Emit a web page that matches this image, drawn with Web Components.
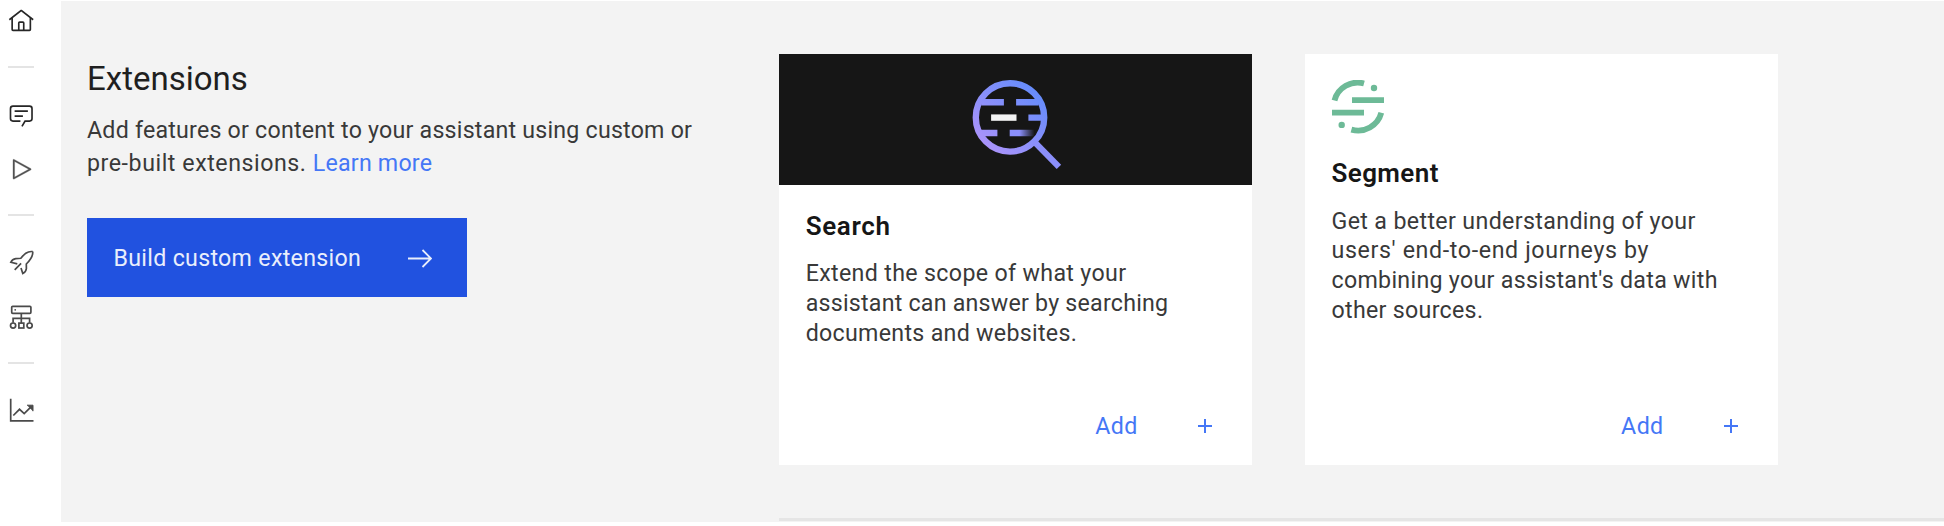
<!DOCTYPE html>
<html lang="en">
<head>
<meta charset="utf-8">
<title>Extensions</title>
<style>
html,body{margin:0;height:100%;background:#fff;overflow:hidden}
body{font-family:Roboto,"Liberation Sans",sans-serif;color:#393939}
</style>
</head>
<body>
<extensions-page></extensions-page>
<script>
const define = (name, html) => {
  const t = document.createElement('template');
  t.innerHTML = html;
  customElements.define(name, class extends HTMLElement {
    constructor() {
      super();
      this.attachShadow({mode: 'open'}).append(t.content.cloneNode(true));
    }
  });
};

/* one line of copy, with its tracking in --ls */
define('text-line', `<style>
:host{display:block;white-space:nowrap;letter-spacing:var(--ls,.3px)}
</style><slot></slot>`);

define('side-nav', `<style>
:host{display:block;box-sizing:border-box;width:60.5px;padding:7.5px 0 0 7.5px;background:#fff}
svg{display:block;width:26.5px;height:26.5px;fill:#262626}
.s{fill:none;stroke:#4a4a4a;stroke-width:1.7}
hr{margin:0;border:0;width:26.5px;height:2px;background:#e4e4e4}
</style>
<svg viewBox="0 0 32 32"><path d="M16.612 2.214a1.01 1.01 0 0 0-1.243 0L1 13.419l1.243 1.572L4 13.621V26a2 2 0 0 0 2 2h20a2 2 0 0 0 2-2V13.63L29.757 15 31 13.428ZM18 26h-4v-8h4Zm2 0v-8a2 2 0 0 0-2-2h-4a2 2 0 0 0-2 2v8H6V12.062l10-7.79 10 7.8V26Z"/></svg>
<hr style="margin-top:32px">
<svg viewBox="0 0 32 32" style="margin-top:33.500px"><path d="M17.74 30 16 29l4-7h6a2 2 0 0 0 2-2V8a2 2 0 0 0-2-2H6a2 2 0 0 0-2 2v12a2 2 0 0 0 2 2h9v2H6a4 4 0 0 1-4-4V8a4 4 0 0 1 4-4h20a4 4 0 0 1 4 4v12a4 4 0 0 1-4 4h-4.84ZM8 10h16v2H8Zm0 6h10v2H8Z"/></svg>
<svg viewBox="0 0 32 32" style="margin-top:28px;fill:#525252;stroke:#525252;stroke-width:.3"><path d="M7 28a1 1 0 0 1-1-1V5a1 1 0 0 1 1.482-.876l20 11a1 1 0 0 1 0 1.752l-20 11A1 1 0 0 1 7 28ZM8 6.69V25.31L24.925 16Z"/></svg>
<hr style="margin-top:31.500px">
<svg class="s" viewBox="7.5 249 26.5 26.5" style="margin-top:32.500px"><path d="M32.2 251.6C26.500 250.900 23.500 254.500 20.300 258.300L15.300 258.700C12.500 259.100 11 260.900 10.300 262.300L16.800 263.900M32.200 251.600C32.700 256.500 29.500 260.400 25.800 264L25.900 268.500C25.600 271.200 23.800 272.800 22.300 273.500L20.500 267.900M14.200 269.800L20.600 263.400"/></svg>
<svg class="s" viewBox="7.5 304 26.500 26.500" style="margin-top:28.500px"><rect x="11.200" y="306.300" width="19.200" height="7" rx="1"/><path d="M20.800 313.300V323M12.600 322.800V318.300H29.100V322.800"/><circle cx="12.600" cy="325.600" r="2.600"/><circle cx="29.100" cy="325.600" r="2.600"/><rect x="18.400" y="323.100" width="4.900" height="4.900"/><circle cx="14.700" cy="309.800" r=".9" fill="#4a4a4a" stroke="none"/></svg>
<hr style="margin-top:32px">
<svg class="s" viewBox="7.500 398 26.500 26.500" style="margin-top:33px"><path d="M10.200 399.700V421.800H33M12.800 416.500L19 410.300L23.700 414.600L31 407.300"/><path d="M26.500 406.200H32.500V412.200" fill="#4a4a4a" stroke-width="1"/></svg>
`);

define('build-button', `<style>
:host{display:flex;box-sizing:border-box;width:379.500px;height:79px;padding:0 35px 0 26.500px;align-items:center;justify-content:space-between;background:#2152e0;color:#e9eefc;font-size:23.200px;line-height:33px}
text-line{padding-top:2px}
svg{display:block;width:26px;height:22px;fill:none;stroke:#e9eefc;stroke-width:1.800}
</style><text-line><slot></slot></text-line><svg viewBox="0 0 26 22"><path d="M2 11.500H24.500M16.500 3L25 11.500L16.500 20"/></svg>`);

define('intro-block', `<style>
:host{display:block;width:692.500px;padding-top:59px}
h1{margin:0;font-weight:400;font-size:33px;line-height:40px;color:#1f1f1f;--ls:0}
p{margin:15.400px 0 37.900px;font-size:23.200px;line-height:33px}
a{color:#4577f6;text-decoration:none;letter-spacing:.2px}
</style>
<h1><text-line>Extensions</text-line></h1>
<p><text-line style="--ls:.22px">Add features or content to your assistant using custom or</text-line><text-line style="--ls:.55px">pre-built extensions. <a>Learn more</a></text-line></p>
<build-button>Build custom extension</build-button>`);

define('add-action', `<style>
:host{display:flex;align-items:center;justify-content:flex-end;gap:60px;padding-right:40.500px;color:#4577f6;font-size:23.200px;line-height:33px}
svg{display:block;width:14px;height:14px;stroke:#4577f6;stroke-width:2}
</style><text-line style="--ls:.4px">Add</text-line><svg viewBox="0 0 14 14"><path d="M7 0V14M0 7H14"/></svg>`);

define('extension-card', `<style>
:host{display:flex;flex-direction:column;box-sizing:border-box;width:473.300px;height:411.800px;background:#fff;padding-bottom:22.600px}
.body{padding:var(--top,24.800px) 0 0 26.700px;flex:1;font-size:23.200px;line-height:29.700px}
h2{margin:0 0 17.200px;font-size:26px;line-height:32px;font-weight:600;color:#161616}
</style>
<slot name="media"></slot>
<div class="body"><h2><slot name="title"></slot></h2><slot></slot></div>
<add-action></add-action>`);

define('search-banner', `<style>
:host{display:flex;height:131.800px;background:#161616;align-items:center;justify-content:center}
svg{display:block;width:88px;height:90px;overflow:visible}
</style>
<svg viewBox="971.600 74.200 88 90"><defs>
<linearGradient id="g" gradientUnits="userSpaceOnUse" x1="985" y1="144" x2="1036" y2="90"><stop stop-color="#a993fa"/><stop offset="1" stop-color="#668cfb"/></linearGradient>
<linearGradient id="f" gradientUnits="userSpaceOnUse" x1="1009" y1="0" x2="1034" y2="0"><stop offset=".4" stop-color="#8b8ffb"/><stop offset="1" stop-color="#8b8ffb" stop-opacity="0"/></linearGradient></defs>
<g fill="none" stroke="url(#g)" stroke-width="6.400"><circle cx="1009.600" cy="116.600" r="34.200"/><path d="M981 101.400H1003.500M1015.700 101.400H1038M1028 116.800H1043M980 132.200H997"/></g>
<path d="M1034 141L1058.500 166" stroke="#8b8ffb" stroke-width="6.200"/>
<path d="M990.700 113.600h25.400v6.400h-25.400Z" fill="#f4f4f4"/><path d="M1009.300 129h25v6.400h-25Z" fill="url(#f)"/></svg>`);

define('segment-logo', `<style>
:host{display:block;padding:26.300px 0 0 26.500px}
svg{display:block;width:54px;height:54px}
</style>
<svg viewBox="1331 80 54 54"><g fill="none" stroke="#6dba97" stroke-width="5.800"><path d="M1334.500 100.400A24 24 0 0 1 1364 83.500M1381.300 112.800A24 24 0 0 1 1351.400 129.600M1352 100.200H1384M1332 112.700H1364"/></g><g fill="#6dba97"><circle cx="1374" cy="88" r="3.200"/><circle cx="1341.700" cy="124.900" r="3.200"/></g></svg>`);

define('extensions-page', `<style>
:host{display:flex;height:526px}
main{display:flex;box-sizing:border-box;flex:1;height:521px;margin-top:1px;padding-left:26.500px;background:#f3f3f3}
intro-block{margin-top:-1px}
.catalog{flex:1;display:flex;flex-direction:column;justify-content:space-between;padding:52.700px 0 1px;margin-left:-.5px}
.cards{display:flex;gap:52.500px}
.rule{height:3px;background:#e5e5e5}
</style>
<side-nav></side-nav>
<main>
<intro-block></intro-block>
<section class="catalog">
<div class="cards">
<extension-card><search-banner slot="media"></search-banner><text-line slot="title" style="--ls:.65px">Search</text-line>
<text-line style="--ls:.34px">Extend the scope of what your</text-line><text-line style="--ls:.23px">assistant can answer by searching</text-line><text-line>documents and websites.</text-line></extension-card>
<extension-card style="--top:23.400px"><segment-logo slot="media"></segment-logo><text-line slot="title" style="--ls:.4px">Segment</text-line>
<text-line style="--ls:.36px">Get a better understanding of your</text-line><text-line style="--ls:.64px">users' end-to-end journeys by</text-line><text-line style="--ls:.3px">combining your assistant's data with</text-line><text-line>other sources.</text-line></extension-card>
</div>
<div class="rule"></div>
</section>
</main>`);
</script>
</body>
</html>
